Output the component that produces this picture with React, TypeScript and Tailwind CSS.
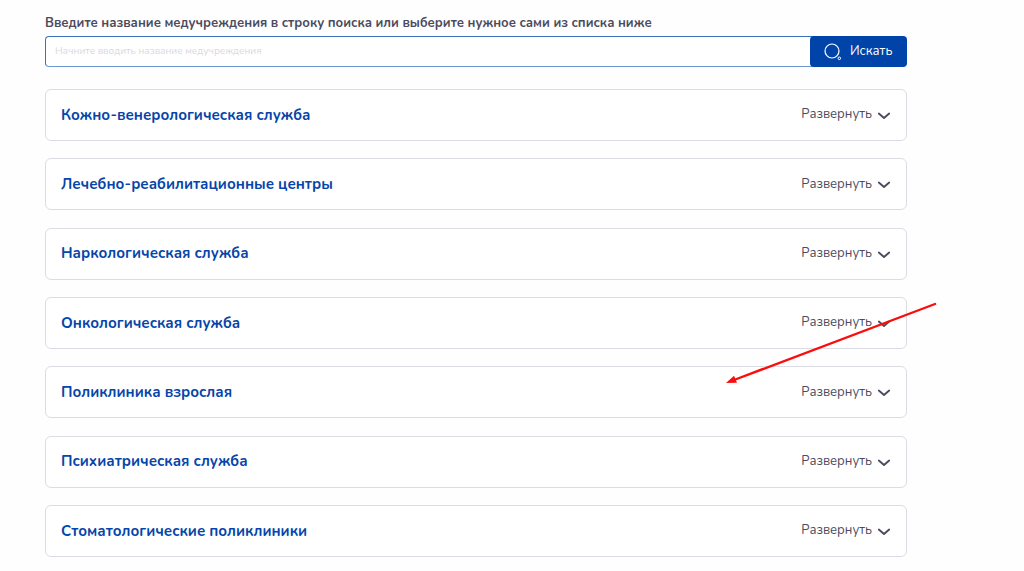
import { useState } from "react";

const services = [
  "Кожно-венерологическая служба",
  "Лечебно-реабилитационные центры",
  "Наркологическая служба",
  "Онкологическая служба",
  "Поликлиника взрослая",
  "Психиатрическая служба",
  "Стоматологические поликлиники",
];

function SearchIcon() {
  return (
    <svg className="size-5" viewBox="0 0 20 20" fill="none" stroke="currentColor" aria-hidden="true">
      <circle cx="9" cy="9" r="7" strokeWidth="1.2" />
      <circle cx="16.3" cy="16.3" r="1.3" strokeWidth="1" />
    </svg>
  );
}

function ChevronIcon() {
  return (
    <svg className="mt-0.5 h-2 w-3" viewBox="0 0 12 8" fill="none" stroke="currentColor" aria-hidden="true">
      <path d="M0.8 1.5 L6 6 L11.2 1.5" strokeWidth="1.9" strokeLinecap="round" strokeLinejoin="round" />
    </svg>
  );
}

function ServiceCard({ title }: { title: string }) {
  const [open, setOpen] = useState(false);

  return (
    <li className="rounded-md border border-[#dcdce4] bg-white">
      <button
        type="button"
        aria-expanded={open}
        onClick={() => setOpen(!open)}
        className="flex h-[50px] w-full items-center justify-between pr-4 pl-[15px] text-left"
      >
        <span className="text-[15px] font-bold text-[#0645a9]">{title}</span>
        <span className="flex items-center gap-1.5 text-[13px] text-[#4c4b5e]">
          Развернуть
          <ChevronIcon />
        </span>
      </button>
    </li>
  );
}

export default function App() {
  return (
    <main className="relative flex min-h-screen flex-col bg-[#fefefe] pt-3.5 pr-[117px] pb-3.5 pl-[45px] font-['Nunito','Open_Sans',sans-serif]">
      <form onSubmit={(e) => e.preventDefault()}>
        <label htmlFor="search" className="block h-[22px] text-[13px] leading-[18px] font-bold text-[#4c4b5e]">
          Введите название медучреждения в строку поиска или выберите нужное сами из списка ниже
        </label>
        <div className="flex h-[31px]">
          <input
            id="search"
            type="text"
            placeholder="Начните вводить название медучреждения"
            className="-mr-1 min-w-0 flex-1 rounded-l border border-[#3b71bd] border-b-[#6f98d0] bg-white px-[9px] text-[10px] text-[#4c4b5e] outline-none placeholder:text-[#d9d9df]"
          />
          <button
            type="submit"
            className="flex w-[97px] items-center gap-[7px] rounded bg-[#0044aa] pl-[13px] text-[13px] text-white"
          >
            <SearchIcon />
            Искать
          </button>
        </div>
      </form>

      <ul className="mt-[22px] flex flex-1 flex-col justify-between">
        {services.map((title) => (
          <ServiceCard key={title} title={title} />
        ))}
      </ul>

      <svg
        className="pointer-events-none absolute top-[300px] right-[84px] h-[88px] w-[216px]"
        viewBox="0 0 216 88"
        aria-hidden="true"
      >
        <path d="M211 4 L10 80" stroke="#fb0d0d" strokeWidth="2.4" strokeLinecap="round" />
        <path d="M2 83 L10 75.8 L13 82.8 Z" fill="#fb0d0d" />
      </svg>
    </main>
  );
}
